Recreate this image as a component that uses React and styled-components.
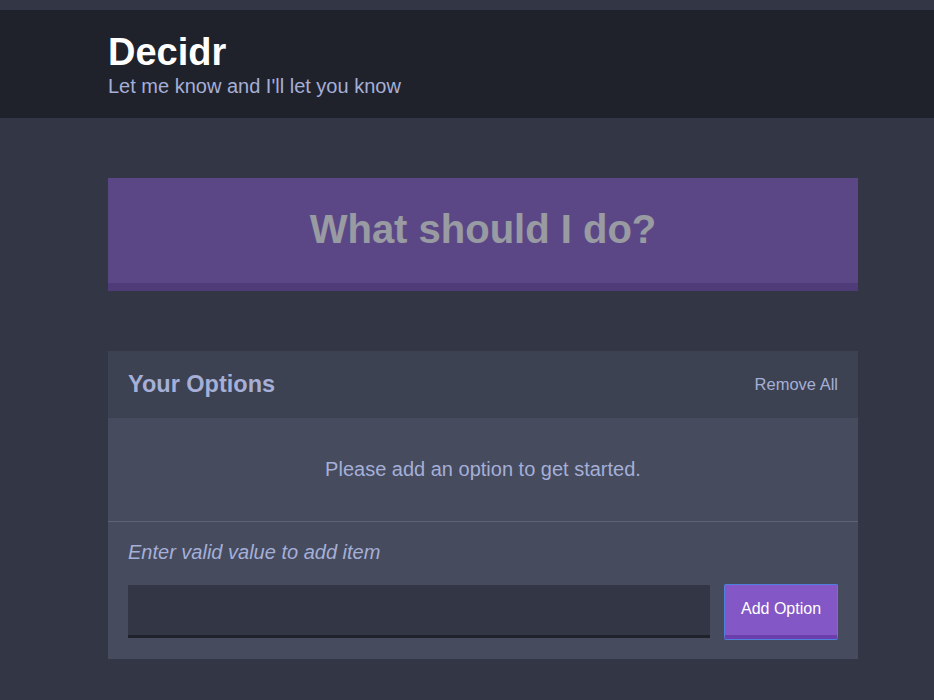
import React, { useState } from 'react';
import styled, { createGlobalStyle } from 'styled-components';

const GlobalStyle = createGlobalStyle`
  html, body {
    margin: 0;
    padding: 0;
    background: #333745;
    font-family: "Liberation Sans", Arial, sans-serif;
    color: #a5afd7;
  }
  body {
    min-height: 100vh;
  }
  * {
    box-sizing: border-box;
  }
`;

const Page = styled.div`
  padding-top: 10px;
  min-height: 100vh;
`;

const Container = styled.div`
  width: 750px;
  margin-left: 108px;
`;

const Header = styled.header`
  background: #20222b;
  padding: 22px 0 20px;
  margin-bottom: 60px;
`;

const Title = styled.h1`
  margin: 0;
  font-size: 38px;
  line-height: 40px;
  font-weight: bold;
  color: #ffffff;
`;

const Subtitle = styled.h2`
  margin: 2px 0 0;
  font-size: 20px;
  line-height: 24px;
  font-weight: normal;
  color: #a5afd7;
`;

const BigButton = styled.button`
  display: flex;
  align-items: center;
  justify-content: center;
  width: 100%;
  height: 113px;
  margin-bottom: 60px;
  padding: 0 0 2px;
  background: #8357c5;
  border: none;
  border-bottom: 8px solid #6a3fab;
  color: #ffffff;
  font-family: inherit;
  font-size: 40px;
  font-weight: bold;
  opacity: ${({ disabled }) => (disabled ? 0.5 : 1)};
  cursor: ${({ disabled }) => (disabled ? 'default' : 'pointer')};
`;

const Widget = styled.div`
  background: #464b5e;
  margin-bottom: 40px;
`;

const WidgetHeader = styled.div`
  display: flex;
  align-items: center;
  justify-content: space-between;
  height: 67px;
  padding: 0 20px;
  background: #3c4251;
`;

const WidgetTitle = styled.h3`
  margin: 0;
  font-size: 23.5px;
  font-weight: bold;
  color: #a5afd7;
`;

const LinkButton = styled.button`
  background: none;
  border: none;
  padding: 0;
  font-family: inherit;
  font-size: 16.5px;
  color: #a5afd7;
  cursor: pointer;
`;

const Message = styled.p`
  margin: 0;
  height: 104px;
  display: flex;
  align-items: center;
  justify-content: center;
  font-size: 20px;
  color: #a5afd7;
  border-bottom: 1px solid #5d6275;
`;

const OptionForm = styled.form`
  padding: 18px 20px 20px;
`;

const FormError = styled.p`
  margin: 0 0 20px;
  font-size: 20px;
  line-height: 24px;
  font-style: italic;
  color: #a5afd7;
`;

const Row = styled.div`
  display: flex;
  align-items: center;
  gap: 14px;
`;

const Input = styled.input`
  flex: 1;
  height: 53px;
  padding: 0 12px;
  background: #333745;
  border: none;
  border-bottom: 3px solid #20222b;
  color: #a5afd7;
  font-family: inherit;
  font-size: 18px;
  outline: none;
`;

const AddButton = styled.button`
  width: 114px;
  height: 55px;
  padding: 0 0 2px;
  background: #8357c5;
  border: 1px solid #4f7fdf;
  border-bottom: 4px solid #6a3fab;
  box-shadow: 0 1px 0 0 #4f7fdf;
  border-radius: 2px;
  color: #ffffff;
  font-family: inherit;
  font-size: 16px;
  cursor: pointer;
`;

const App = () => {
  const [options, setOptions] = useState([]);
  const [value, setValue] = useState('');

  const handleSubmit = (e) => {
    e.preventDefault();
    if (value.trim()) {
      setOptions([...options, value.trim()]);
      setValue('');
    }
  };

  return (
    <Page>
      <GlobalStyle />
      <Header>
        <Container>
          <Title>Decidr</Title>
          <Subtitle>Let me know and I'll let you know</Subtitle>
        </Container>
      </Header>
      <Container>
        <BigButton disabled={options.length === 0}>What should I do?</BigButton>
        <Widget>
          <WidgetHeader>
            <WidgetTitle>Your Options</WidgetTitle>
            <LinkButton onClick={() => setOptions([])}>Remove All</LinkButton>
          </WidgetHeader>
          {options.length === 0 && <Message>Please add an option to get started.</Message>}
          <OptionForm onSubmit={handleSubmit}>
            <FormError>Enter valid value to add item</FormError>
            <Row>
              <Input value={value} onChange={(e) => setValue(e.target.value)} />
              <AddButton type="submit">Add Option</AddButton>
            </Row>
          </OptionForm>
        </Widget>
      </Container>
    </Page>
  );
};

export default App;
